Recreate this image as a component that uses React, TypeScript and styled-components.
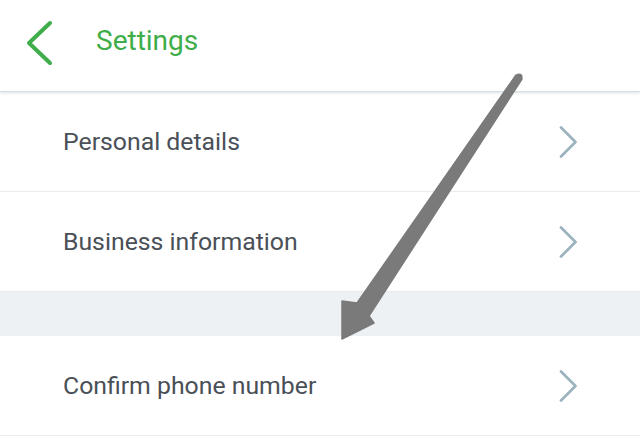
import React from "react";
import styled, { createGlobalStyle } from "styled-components";

const Global = createGlobalStyle`
  html, body { margin: 0; padding: 0; background: #ffffff; }
  body { font-family: Roboto, "Liberation Sans", sans-serif; width: 640px; height: 448px; overflow: hidden; }
`;

const Page = styled.div`
  position: relative;
  width: 640px;
  height: 448px;
  background: #ffffff;
  display: flex;
  flex-direction: column;
`;

const Header = styled.header`
  height: 92px;
  display: flex;
  align-items: center;
  background: #ffffff;
  border-bottom: 1px solid #d9e0e3;
  box-shadow: 0 1px 3px rgba(120, 140, 150, 0.25);
  position: relative;
  z-index: 1;
  flex-shrink: 0;
  box-sizing: border-box;
`;

const BackButton = styled.div`
  width: 96px;
  height: 90px;
  display: flex;
  align-items: center;
  padding-left: 24px;
  padding-bottom: 6px;
  box-sizing: border-box;
`;

const Title = styled.h1`
  margin: 0;
  font-size: 28px;
  font-weight: 400;
  color: #3fae4a;
  padding-bottom: 10px;
`;

const Row = styled.div`
  height: 100px;
  display: flex;
  align-items: center;
  justify-content: space-between;
  padding: 0 60px 0 63px;
  border-bottom: 1px solid #e9ecee;
  box-sizing: border-box;
  flex-shrink: 0;
`;

const Label = styled.span`
  font-size: 24.8px;
  color: #4a5057;
`;

const Spacer = styled.div`
  height: 44px;
  background: #eef1f4;
  flex-shrink: 0;
`;

const Overlay = styled.svg`
  position: absolute;
  left: 0;
  top: 0;
  pointer-events: none;
  z-index: 2;
`;

const Chevron = () => (
  <svg width="22" height="34" viewBox="0 0 22 34">
    <polyline points="3,2.5 17.5,17 3,31.5" fill="none" stroke="#9db3bf" strokeWidth="2.8" strokeLinecap="round" strokeLinejoin="round" />
  </svg>
);

const items = ["Personal details", "Business information"];

export default function App() {
  return (
    <>
      <Global />
      <Page>
        <Header>
          <BackButton>
            <svg width="30" height="46" viewBox="0 0 30 46">
              <polyline points="26,3 5,23 26,43" fill="none" stroke="#3fae4a" strokeWidth="4" strokeLinecap="round" strokeLinejoin="round" />
            </svg>
          </BackButton>
          <Title>Settings</Title>
        </Header>
        <Row>
          <Label>{items[0]}</Label>
          <Chevron />
        </Row>
        <Row>
          <Label>{items[1]}</Label>
          <Chevron />
        </Row>
        <Spacer />
        <Row>
          <Label>Confirm phone number</Label>
          <Chevron />
        </Row>
        <Overlay width="640" height="448" viewBox="0 0 640 448">
          <circle cx="519" cy="77" r="3.6" fill="#7a7a7a" />
          <polygon
            points="516,75 357,303 342,301 342,339 374,323 369,316 522,79"
            fill="#7a7a7a"
            stroke="#7a7a7a"
            strokeWidth="1.5"
            strokeLinejoin="round"
          />
        </Overlay>
      </Page>
    </>
  );
}
